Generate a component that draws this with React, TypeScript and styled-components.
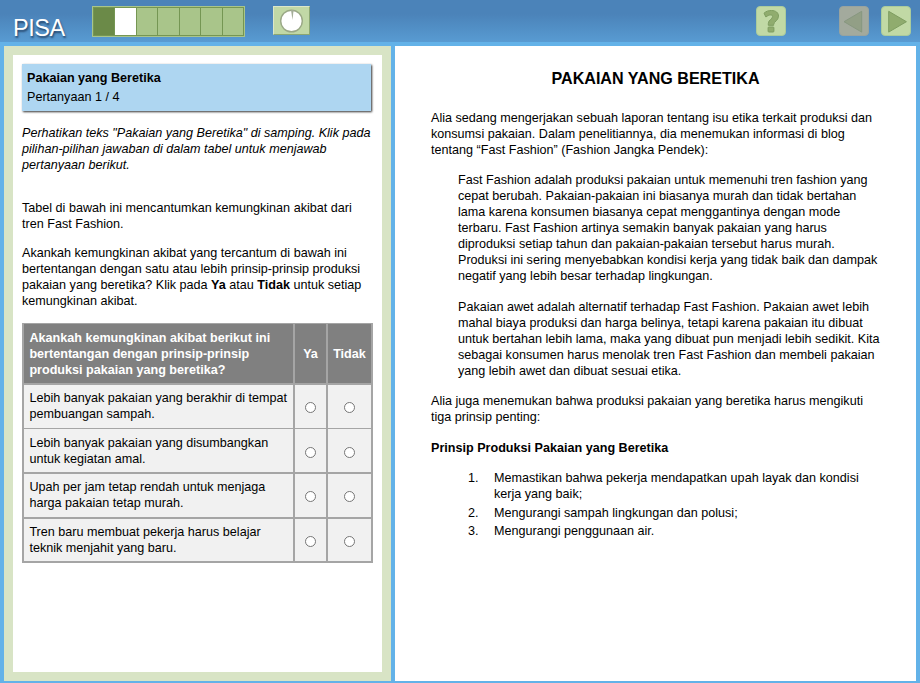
import React, { useState } from "react";
import styled, { createGlobalStyle, css } from "styled-components";

const GlobalStyle = createGlobalStyle`
  * { box-sizing: border-box; }
  body {
    margin: 0;
    overflow: hidden;
    background: #63b2e8;
    color: #000;
    font: 12.6px/16px "Liberation Sans", Arial, sans-serif;
  }
`;

const Page = styled.div`
  display: flex;
  flex-direction: column;
  width: 920px;
  height: 683px;
  background: #63b2e8;
`;

const Header = styled.header`
  display: flex;
  align-items: flex-start;
  height: 42px;
  padding: 6px 9px 0 13px;
  background: linear-gradient(#4b83b9 0, #4b83b9 14px, #589bd2 42px);
`;

const Logo = styled.div`
  width: 79px;
  padding-top: 8px;
  color: #fff;
  font-size: 23.5px;
  line-height: 28px;
  letter-spacing: -0.5px;
  text-shadow: 1px 2px 2px rgba(20, 40, 70, 0.7);
`;

const Progress = styled.div`
  display: flex;
  width: 153px;
  height: 31px;
  margin-right: 28px;
  border: 1px solid #a9c58a;
  background: #a9c58a;
`;

const Step = styled.div<{ $state: "done" | "current" | "open" }>`
  flex: 1;
  border: 1px solid #759653;
  border-right-width: 0;
  background: ${({ $state }) =>
    $state === "done" ? "#6b8a48" : $state === "current" ? "#fff" : "#a9c58a"};
  &:last-child { border-right-width: 1px; }
`;

const Timer = styled.div`
  display: grid;
  place-items: center;
  width: 37px;
  height: 29px;
  border: 1px solid;
  border-color: #dbe6c9 #8ba673 #8ba673 #dbe6c9;
  background: #c1d8a6;
`;

const Tools = styled.nav`
  display: flex;
  margin-left: auto;
`;

const ToolButton = styled.button<{ $dim?: boolean; $gap?: number }>`
  width: 30px;
  height: 30px;
  margin: 0 0 0 ${({ $gap }) => $gap ?? 0}px;
  padding: 0;
  border: 1px solid ${({ $dim }) => ($dim ? "#98a3a0" : "#aacb9c")};
  border-radius: 4px;
  background: ${({ $dim }) => ($dim ? "#a3aa9d" : "#c1d9a5")};
  svg { display: block; }
`;

const Panels = styled.main`
  display: grid;
  grid-template-columns: 387px 521px;
  gap: 4px;
  height: 639px;
  padding: 4px 4px 0;
`;

const Question = styled.section`
  border: 9px solid #d8e4c5;
  padding: 9px 9px 0;
  background: #fff;
`;

const QuestionHead = styled.div`
  height: 47px;
  width: 349px;
  padding: 5px 5px 0;
  background: #aed6f1;
  box-shadow: 1px 1px 2px #333;
  line-height: 19px;
`;

const Para = styled.p<{ $top: number; $italic?: boolean; $indent?: boolean }>`
  margin: ${({ $top }) => $top}px 0 0 ${({ $indent }) => ($indent ? 27 : 0)}px;
  white-space: pre;
  ${({ $italic }) => $italic && css`font-style: italic;`}
`;

const Table = styled.div`
  display: grid;
  grid-template-columns: 271px 33px 45px;
  grid-template-rows: 61px 44px 45px 45px 44px;
  width: 351px;
  margin-top: 14px;
  padding: 1px 0 0 2px;
  background: #a5a5a5;
`;

const Cell = styled.div<{ $head?: boolean; $center?: boolean; $tight?: boolean; $pad?: number }>`
  display: flex;
  align-items: ${({ $head }) => ($head ? "center" : "flex-start")};
  justify-content: ${({ $center }) => ($center ? "center" : "flex-start")};
  padding: ${({ $pad = 0 }) => $pad}px ${({ $center }) => ($center ? 0 : 5.4)}px 0;
  border: solid #a5a5a5;
  border-width: 0 2px ${({ $tight }) => ($tight ? 1 : 2)}px 0;
  background: ${({ $head }) => ($head ? "#808080" : "#f1f1f1")};
  color: ${({ $head }) => ($head ? "#fff" : "#000")};
  font-weight: ${({ $head }) => ($head ? "bold" : "normal")};
  white-space: pre;
`;

const Radio = styled.input`
  appearance: none;
  width: 11px;
  height: 11px;
  margin: 12px 0 0;
  border: 1px solid #767676;
  border-radius: 50%;
  background: #fff;
  &:checked { background: radial-gradient(#0075ff 3px, #fff 4px); }
`;

const Text = styled.article`
  padding: 23px 36px 0;
  background: #fff;
`;

const Title = styled.h1`
  margin: 0;
  font-size: 16.1px;
  line-height: 19px;
  text-align: center;
`;

const Subtitle = styled.h2`
  margin: 15px 0 0;
  font-size: inherit;
  line-height: 16px;
`;

const Principles = styled.ol`
  margin: 14px 0 0;
  padding: 0 0 0 37px;
  list-style: none;
`;

const Principle = styled.li`
  display: grid;
  grid-template-columns: 26px auto;
  margin-bottom: 2.5px;
  white-space: pre;
`;

const steps = ["done", "current", "open", "open", "open", "open", "open"] as const;

const statements = [
  "Lebih banyak pakaian yang berakhir di tempat\npembuangan sampah.",
  "Lebih banyak pakaian yang disumbangkan\nuntuk kegiatan amal.",
  "Upah per jam tetap rendah untuk menjaga\nharga pakaian tetap murah.",
  "Tren baru membuat pekerja harus belajar\nteknik menjahit yang baru.",
];

const principles = [
  "Memastikan bahwa pekerja mendapatkan upah layak dan kondisi\nkerja yang baik;",
  "Mengurangi sampah lingkungan dan polusi;",
  "Mengurangi penggunaan air.",
];

export default function App() {
  const [answers, setAnswers] = useState<Record<number, string>>({});

  return (
    <Page>
      <GlobalStyle />
      <Header>
        <Logo>PISA</Logo>
        <Progress>
          {steps.map((state, i) => <Step key={i} $state={state} />)}
        </Progress>
        <Timer>
          <svg width="25" height="25" viewBox="0 0 25 25">
            <circle cx="12.5" cy="13" r="10.8" fill="#fff" stroke="#9aa886" strokeWidth="1.4" />
            <path d="M12 2h2.6l-1.1 10z" fill="#a4ad98" />
          </svg>
        </Timer>
        <Tools>
          <ToolButton aria-label="Bantuan">
            <svg width="28" height="28" viewBox="0 0 28 28">
              <path
                d="M7 6.2C9 4.3 11.4 3.5 14.4 3.5C18.8 3.5 21.5 5.7 21.5 9.1C21.5 13.6 16.9 14.4 16.7 17.4V18.3H11.3V16.6C11.3 12.7 15.6 12.2 15.6 9.6C15.6 8.5 14.9 8 13.7 8C12.1 8 10.7 8.6 8.9 10Z"
                fill="#90ac6e" stroke="#7e9d60" strokeWidth="1" strokeLinejoin="round"
              />
              <rect x="11.1" y="20" width="5.8" height="5" rx=".8" fill="#90ac6e" stroke="#7e9d60" strokeWidth="1" />
            </svg>
          </ToolButton>
          <ToolButton $dim $gap={53} aria-label="Sebelumnya">
            <svg width="28" height="28" viewBox="0 0 28 28">
              <path d="M21.7 4.3v20.8L4 14.7z" fill="#929f86" stroke="#879780" strokeWidth="1" />
            </svg>
          </ToolButton>
          <ToolButton $gap={12} aria-label="Berikutnya">
            <svg width="28" height="28" viewBox="0 0 28 28">
              <path d="M6.7 4.3v20.8L24.4 14.7z" fill="#90ac6e" stroke="#7e9d60" strokeWidth="1" />
            </svg>
          </ToolButton>
        </Tools>
      </Header>
      <Panels>
        <Question>
          <QuestionHead>
            <b>Pakaian yang Beretika</b>
            <br />
            Pertanyaan 1 / 4
          </QuestionHead>
          <Para $top={14} $italic>{`Perhatikan teks "Pakaian yang Beretika" di samping. Klik pada
pilihan-pilihan jawaban di dalam tabel untuk menjawab
pertanyaan berikut.`}</Para>
          <Para $top={27}>{`Tabel di bawah ini mencantumkan kemungkinan akibat dari
tren Fast Fashion.`}</Para>
          <Para $top={13}>
            {`Akankah kemungkinan akibat yang tercantum di bawah ini
bertentangan dengan satu atau lebih prinsip-prinsip produksi
pakaian yang beretika? Klik pada `}<b>Ya</b> atau <b>Tidak</b>{` untuk setiap
kemungkinan akibat.`}
          </Para>
          <Table>
            <Cell $head>{`Akankah kemungkinan akibat berikut ini
bertentangan dengan prinsip-prinsip
produksi pakaian yang beretika?`}</Cell>
            <Cell $head $center>Ya</Cell>
            <Cell $head $center>Tidak</Cell>
            {statements.map((statement, i) => (
              <React.Fragment key={i}>
                <Cell $pad={i === 1 ? 6 : 5} $tight={i === 0}>{statement}</Cell>
                {["Ya", "Tidak"].map((choice) => (
                  <Cell $center $pad={i === 1 ? 6 : 5} $tight={i === 0} key={choice}>
                    <Radio
                      type="radio"
                      name={`statement-${i}`}
                      aria-label={choice}
                      checked={answers[i] === choice}
                      onChange={() => setAnswers({ ...answers, [i]: choice })}
                    />
                  </Cell>
                ))}
              </React.Fragment>
            ))}
          </Table>
        </Question>
        <Text>
          <Title>PAKAIAN YANG BERETIKA</Title>
          <Para $top={22}>{`Alia sedang mengerjakan sebuah laporan tentang isu etika terkait produksi dan
konsumsi pakaian. Dalam penelitiannya, dia menemukan informasi di blog
tentang “Fast Fashion” (Fashion Jangka Pendek):`}</Para>
          <Para $top={14} $indent>{`Fast Fashion adalah produksi pakaian untuk memenuhi tren fashion yang
cepat berubah. Pakaian-pakaian ini biasanya murah dan tidak bertahan
lama karena konsumen biasanya cepat menggantinya dengan mode
terbaru. Fast Fashion artinya semakin banyak pakaian yang harus
diproduksi setiap tahun dan pakaian-pakaian tersebut harus murah.
Produksi ini sering menyebabkan kondisi kerja yang tidak baik dan dampak
negatif yang lebih besar terhadap lingkungan.`}</Para>
          <Para $top={15} $indent>{`Pakaian awet adalah alternatif terhadap Fast Fashion. Pakaian awet lebih
mahal biaya produksi dan harga belinya, tetapi karena pakaian itu dibuat
untuk bertahan lebih lama, maka yang dibuat pun menjadi lebih sedikit. Kita
sebagai konsumen harus menolak tren Fast Fashion dan membeli pakaian
yang lebih awet dan dibuat sesuai etika.`}</Para>
          <Para $top={14}>{`Alia juga menemukan bahwa produksi pakaian yang beretika harus mengikuti
tiga prinsip penting:`}</Para>
          <Subtitle>Prinsip Produksi Pakaian yang Beretika</Subtitle>
          <Principles>
            {principles.map((principle, i) => (
              <Principle key={i}>
                <span>{i + 1}.</span>
                <span>{principle}</span>
              </Principle>
            ))}
          </Principles>
        </Text>
      </Panels>
    </Page>
  );
}
